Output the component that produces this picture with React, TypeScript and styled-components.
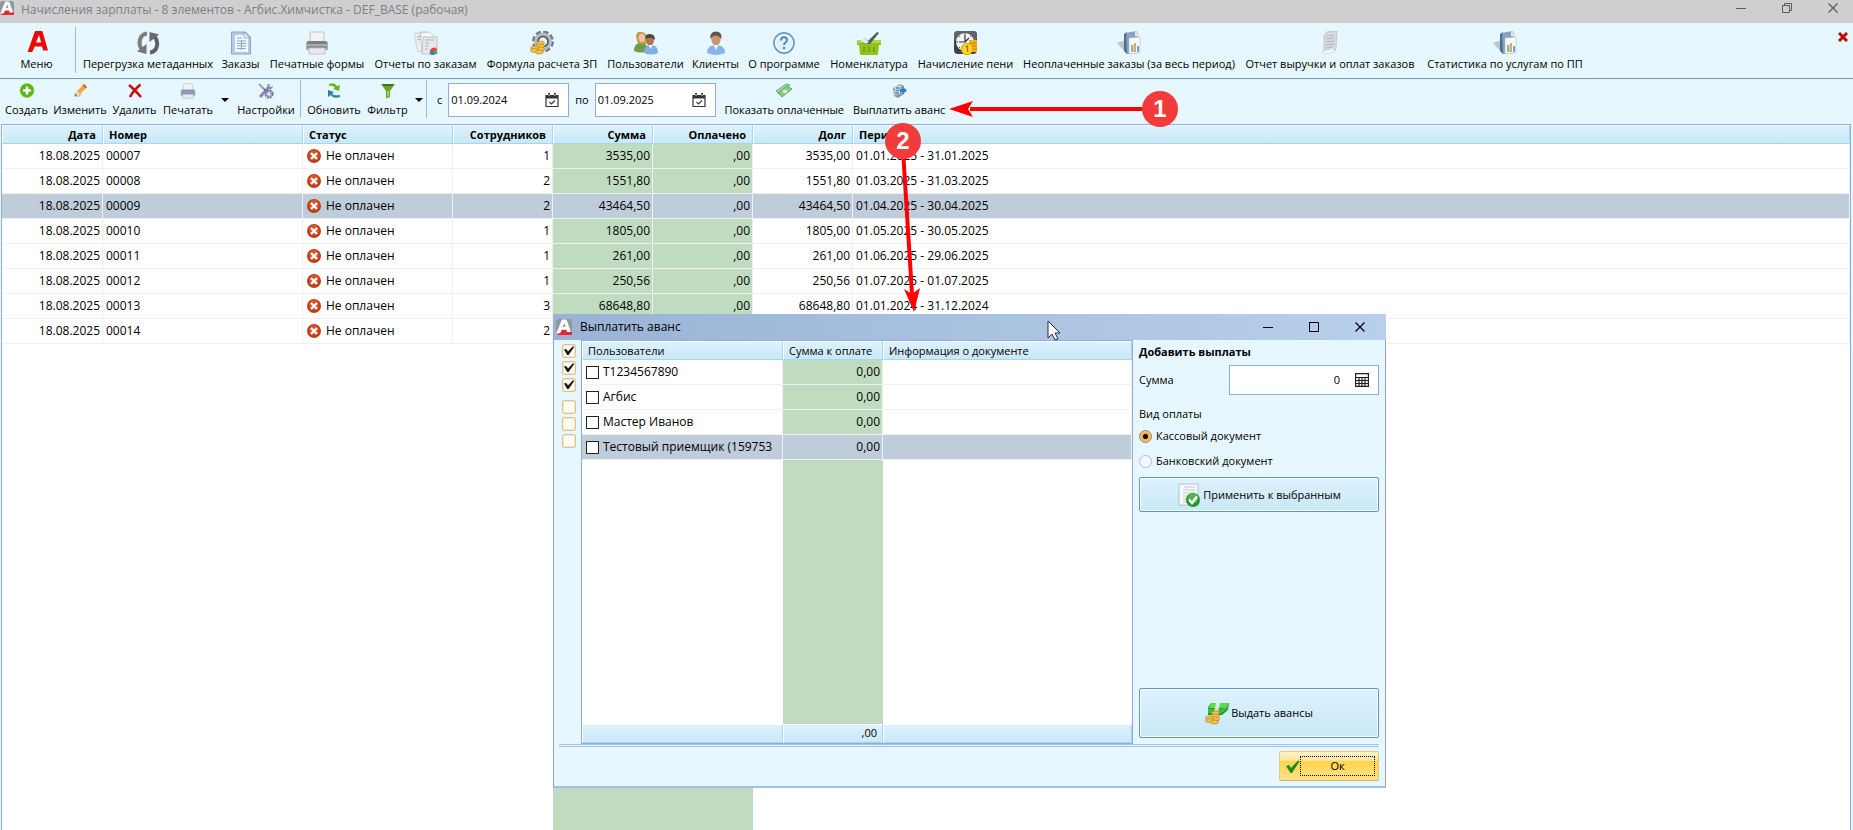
import React from 'react';
import styled, { createGlobalStyle, css } from 'styled-components';

const GlobalStyle = createGlobalStyle`
  * { box-sizing: border-box; }
  body { margin: 0; background: #fff; overflow-x: hidden; }
  body, button, input { font-family: "Open Sans", "Noto Sans", sans-serif; font-size: 11px; line-height: 16px; color: #000; }
  button { margin: 0; padding: 0; border: 0; background: none; cursor: default; }
  svg { display: block; flex: none; }
`;

const sky = '#e6f7ff';
const line = '#8fadda';
const green = '#c0dcc0';
const headFill = 'linear-gradient(#dcf2ff, #c9e8f7)';

/* ---------- window ---------- */

const Window = styled.div`
  position: relative;
  display: flex;
  flex-direction: column;
  min-height: 100vh;
  background: ${sky};
  overflow: hidden;
`;

const TitleBar = styled.header`
  display: flex;
  align-items: flex-start;
  gap: 7px;
  height: 23px;
  padding-top: 1px;
  background: #cfcfcf;
`;

const WindowTitle = styled.h1`
  flex: 1;
  margin: 0;
  font-size: 12px;
  font-weight: 400;
  line-height: 17px;
  color: #7a7f88;
`;

const WindowControls = styled.div<{ $color: string }>`
  display: flex;
  gap: 6px;
  color: ${(p) => p.$color};
`;

const ControlButton = styled.button`
  display: flex;
  justify-content: center;
  align-items: center;
  width: 40px;
  height: 14px;
  color: inherit;
`;

/* ---------- toolbars ---------- */

const MainToolbar = styled.nav`
  display: flex;
  height: 56px;
  padding-top: 8px;
  border-bottom: 1px solid #6f9fb8;
`;

const ActionToolbar = styled.div`
  display: flex;
  height: 45px;
  padding: 4px 0 0 3px;
`;

const ToolButton = styled.button<{ $width: number; $small?: boolean }>`
  display: flex;
  flex-direction: column;
  align-items: center;
  flex: none;
  gap: ${(p) => (p.$small ? 3 : 1)}px;
  width: ${(p) => p.$width}px;
  height: ${(p) => (p.$small ? 35 : 41)}px;
  white-space: nowrap;
`;

const DropArrow = styled.button`
  display: flex;
  align-items: center;
  justify-content: center;
  width: 15px;
  height: 34px;
  &::before {
    content: '';
    border: 4px solid transparent;
    border-top-color: #000;
    border-bottom: 0;
  }
`;

const Divider = styled.span<{ $tall?: boolean }>`
  width: 1px;
  height: ${(p) => (p.$tall ? 46 : 38)}px;
  margin: ${(p) => (p.$tall ? '-4px 3px 0 2px' : '-3px 3px 0 0')};
  background: #9fbde8;
`;

const CloseTab = styled.button`
  margin: 1px 5px 0 auto;
  height: 10px;
`;

const DateLabel = styled.label`
  display: flex;
  align-items: center;
  height: 34px;
  padding: 0 6px;
`;

const FieldBox = styled.div<{ $width: number; $height: number }>`
  display: flex;
  align-items: center;
  width: ${(p) => p.$width}px;
  height: ${(p) => p.$height}px;
  padding: 0 9px 0 2px;
  border: 1px solid ${line};
  background: #fff;
`;

const FieldInput = styled.input<{ $right?: boolean }>`
  flex: 1;
  min-width: 0;
  padding: 0;
  border: 0;
  outline: 0;
  background: none;
  ${(p) => p.$right && css`padding-right: 15px; text-align: right;`}
`;

const Periods = styled.div`
  display: flex;
  margin: 0 4px 0 1px;
`;

/* ---------- data grids ---------- */

const GridFrame = styled.main`
  display: flex;
  flex: 1;
  flex-direction: column;
  margin: 0 2px 0 1px;
  border: 1px solid ${line};
  border-bottom: 0;
  background: #fff;
`;

const Table = styled.table`
  width: 100%;
  table-layout: fixed;
  border-collapse: separate;
  border-spacing: 0;
  font-size: 12px;
`;

const HeadCell = styled.th<{ $right?: boolean; $plain?: boolean }>`
  height: 19px;
  padding: 0 6px 0 5px;
  border: 1px solid #a9d6ea;
  border-top-color: #fff;
  border-left-color: #fff;
  background: ${headFill};
  font-size: 11px;
  font-weight: ${(p) => (p.$plain ? 400 : 700)};
  text-align: ${(p) => (p.$right ? 'right' : 'left')};
  white-space: nowrap;
`;

const Row = styled.tr<{ $selected?: boolean }>`
  background: ${(p) => (p.$selected ? '#bfccda' : '#fff')};
`;

const Cell = styled.td<{ $right?: boolean; $fill?: boolean }>`
  height: 25px;
  padding: 0 2px 0 3px;
  border-right: 1px solid #f0f0f0;
  border-bottom: 1px solid #f0f0f0;
  background: ${(p) => (p.$fill ? green : 'transparent')};
  text-align: ${(p) => (p.$right ? 'right' : 'left')};
  white-space: nowrap;
  overflow: hidden;
`;

const CellContent = styled.label<{ $gap: number }>`
  display: flex;
  align-items: center;
  gap: ${(p) => p.$gap}px;
  padding-left: 1px;
`;

const EmptyArea = styled.div<{ $columns: string }>`
  display: grid;
  grid-template-columns: ${(p) => p.$columns};
  flex: 1;
`;

const GreenStripe = styled.div`
  grid-column: 2;
  background: ${green};
`;

/* ---------- dialog ---------- */

const Dialog = styled.section`
  position: absolute;
  left: 553px;
  top: 314px;
  width: 833px;
  border: 1px solid #97a3b3;
  border-top: 0;
  border-bottom: 2px solid #a4c1ec;
  background: ${sky};
`;

const DialogTitleBar = styled.div`
  display: flex;
  align-items: center;
  gap: 8px;
  height: 26px;
  margin: 0 -1px;
  padding: 0 6px 0 3px;
  background: linear-gradient(90deg, #9ab3d4, #b8d0ec);
`;

const DialogTitle = styled.h2`
  flex: 1;
  margin: 0;
  font-size: 12px;
  font-weight: 400;
`;

const DialogBody = styled.div`
  display: flex;
  height: 404px;
`;

const QuickChecks = styled.div`
  display: flex;
  flex-direction: column;
  gap: 8px;
  width: 27px;
  padding: 4px 0 0 8px;
`;

const CheckGroup = styled.div`
  display: flex;
  flex-direction: column;
  gap: 3px;
`;

const QuickCheck = styled.input`
  appearance: none;
  display: block;
  width: 14px;
  height: 14px;
  margin: 0;
  border: 1px solid #dfc492;
  border-radius: 2px;
  background: #fffaf2;
  box-shadow: inset 0 0 0 1px #fbe6c6;
  &:checked::before {
    content: '';
    display: block;
    width: 10px;
    height: 9px;
    margin: 1px;
    background: #111;
    clip-path: polygon(0 38%, 22% 32%, 40% 62%, 92% 0, 100% 14%, 46% 100%, 32% 100%);
  }
`;

const RowCheck = styled.input`
  appearance: none;
  flex: none;
  width: 13px;
  height: 13px;
  margin: 0;
  border: 1px solid #222;
  background: #fff;
`;

const UserGrid = styled.div`
  display: flex;
  flex: 1;
  flex-direction: column;
  border: 1px solid ${line};
  background: #fff;
`;

const Totals = styled.div`
  display: grid;
  grid-template-columns: 201px 100px 1fr;
  height: 19px;
`;

const Total = styled.div`
  padding-right: 5px;
  border: 1px solid #a9d6ea;
  border-top-color: #fff;
  border-left-color: #fff;
  background: ${headFill};
  text-align: right;
`;

const Panel = styled.form`
  display: flex;
  flex-direction: column;
  width: 252px;
  padding: 4px 6px;
`;

const PanelHeading = styled.h3`
  margin: 0 0 5px;
  font-size: 11px;
  font-weight: 700;
`;

const AmountRow = styled.div`
  display: flex;
  align-items: center;
  justify-content: space-between;
`;

const PaymentKind = styled.fieldset`
  display: flex;
  flex-direction: column;
  gap: 9px;
  margin: 11px 0 8px;
  padding: 0;
  border: 0;
`;

const KindLegend = styled.legend`
  margin-bottom: 6px;
  padding: 0;
`;

const RadioLabel = styled.label`
  display: flex;
  align-items: center;
  gap: 4px;
`;

const Radio = styled.input`
  appearance: none;
  width: 13px;
  height: 13px;
  margin: 0;
  border: 1px solid #a6bfe4;
  border-radius: 50%;
  background: #f3f8ff;
  &:checked {
    border-color: #8c8265;
    background: radial-gradient(circle, #000 0 2px, #f5a542 3px, #fcd583 6px);
  }
`;

const PanelButton = styled.button<{ $height: number }>`
  display: flex;
  align-items: center;
  justify-content: center;
  gap: 2px;
  height: ${(p) => p.$height}px;
  border: 1px solid #5b95da;
  border-radius: 2px;
  background: ${headFill};
  box-shadow: inset 0 0 0 1px #fff;
`;

const PanelSpacer = styled.div`
  flex: 1;
`;

const PanelEnd = styled.div`
  height: 2px;
`;

const DialogFooter = styled.div`
  display: flex;
  flex-direction: column;
  align-items: flex-end;
  gap: 4px;
  padding: 0 6px 5px 5px;
`;

const DoubleRule = styled.div`
  align-self: stretch;
  height: 3px;
  border-top: 1px solid #a4c1ec;
  border-bottom: 1px solid #a4c1ec;
`;

const OkButton = styled.button`
  display: flex;
  align-items: center;
  width: 100px;
  height: 30px;
  padding: 0 3px 0 6px;
  border: 1px solid #e0cd84;
  border-bottom-color: #c9b56e;
  border-radius: 2px;
  background: linear-gradient(#fff4c6, #ffe797 30%, #ffd44a 32%, #ffe28a);
`;

const OkText = styled.span`
  flex: 1;
  height: 20px;
  border: 1px dotted #000;
  line-height: 18px;
`;

/* ---------- guide marks ---------- */

const Marks = styled.svg`
  position: absolute;
  left: 0;
  top: 0;
  pointer-events: none;
`;

const StepBadge = styled.div<{ $x: number; $y: number }>`
  position: absolute;
  left: ${(p) => p.$x}px;
  top: ${(p) => p.$y}px;
  width: 36px;
  height: 36px;
  border-radius: 50%;
  background: #f23b3b;
  color: #fff;
  font: bold 24px/36px "Liberation Sans", sans-serif;
  text-align: center;
`;

/* ---------- icons ---------- */

const Icon = ({ s = 24, children }: { s?: number; children: React.ReactNode }) => (
  <svg width={s} height={s} viewBox={`0 0 ${s} ${s}`} aria-hidden="true">{children}</svg>
);

const BrandMark = ({ s }: { s: number }) => (
  <svg width={s} height={s} viewBox="0 0 16 16" aria-hidden="true">
    <rect width="16" height="16" rx="3" fill="#8d999c" />
    <path d="M0 14 4 10h8l4 3v3H2z" fill="#e8262f" />
    <path fillRule="evenodd" d="M0 15 5.500 1.500Q6 .6 7 .6h2.400Q10.400.6 10.800 1.500L15 13h-4l-.7-2.200H5.800L4.300 14zM6.600 8h3L8.500 3.900z" fill="#fff" />
  </svg>
);

const MenuIcon = () => (
  <Icon>
    <path fillRule="evenodd" d="M2.500 21 9.300 2Q10.100-1 12.800-1h2q2.400 0 3 2.500L23 19.500h-4.800l-1.300-4H9.800L7.200 21zM11 11.500h5.200L14 4z" fill="#ea0a0a" />
  </Icon>
);
const ReloadIcon = () => (
  <Icon>
    <path d="M11 2.500C3.500 3 1.500 13 6 18.500" fill="none" stroke="#7d7d7d" strokeWidth="4" />
    <path d="m1 20.500 9.500 2.500V13z" fill="#757575" />
    <path d="M14 21.500c8-1 9-11 4.500-16" fill="none" stroke="#606060" strokeWidth="4" />
    <path d="M13.500 1 23 3.500 13.500 11z" fill="#6a6a6a" />
  </Icon>
);
const OrdersIcon = () => (
  <Icon>
    <path d="M2.500 1h14l5 5v17h-19z" fill="#b6cbe8" stroke="#8aa6cf" />
    <path d="M6 4h9v3h4v14H6z" fill="#f5f9ff" /><path d="M15 1v6h6z" fill="#dfeafa" stroke="#7e9bc6" strokeWidth=".7" />
    <path d="M8 10h9M8 12.500h9M8 15h9M8 17.500h9M12.500 9v10M8 7h5" stroke="#8ca5cc" />
  </Icon>
);
const PrinterIcon = ({ s = 24 }: { s?: number }) => (
  <svg width={s} height={s} viewBox="0 0 24 24" aria-hidden="true">
    <path d="M5 11V2q0-1 1-1h12q1 0 1 1v9z" fill="#f3f3f5" stroke="#bdbfc5" />
    <path d="M1 12q0-2 2-2h18q2 0 2 2v7H1z" fill="#aaacb0" /><path d="M3 10h18l1 3H2z" fill="#7d7f84" />
    <path d="M2 15h20v2H2z" fill="#8d8f94" /><path d="M4 17h16v6H4z" fill="#e9e9ec" stroke="#b3b5ba" strokeWidth=".8" />
    {s < 20 && <path d="M3 11h18v4H3z" fill="#7fa3cf" />}
  </svg>
);
const ReportsIcon = () => (
  <Icon>
    <path d="m0 3 12-3 3 18-11 3z" fill="#eceeee" stroke="#c2c6c6" strokeWidth=".7" />
    <path d="m6 2 9-1 4 3v15l-11 1z" fill="#f5f6f6" stroke="#bcc1c1" strokeWidth=".7" />
    <path d="M9 6h14v17H8z" fill="#e8eaea" stroke="#b4baba" strokeWidth=".8" />
    <path d="M3 6l5-1M3 9l4-1M11 9h9M11 12h4M11 15h4M11 18h3" stroke="#aeb5b5" />
    <path d="M16 21a4 4 0 0 1 7-3l-3 3z" fill="#e2492c" /><path d="M23 18v5h-3v-2z" fill="#58aa3c" /><path d="M15.500 20.500h5V24h-3q-2-1-2-3.500z" fill="#387fd4" />
  </Icon>
);
const Coins = () => (
  <g stroke="#b07a18" strokeWidth=".6">
    {[[9, 12], [9, 15], [9, 18], [3, 17], [3, 19.500], [8, 21]].map(([x, y]) => (
      <ellipse key={`${x}-${y}`} cx={x + 1.500} cy={y} rx="4" ry="2" fill="#f2c24c" />
    ))}
  </g>
);
const FormulaIcon = () => (
  <Icon>
    <g fill="none" stroke="#6e7681">
      <circle cx="13" cy="10.500" r="9.500" strokeWidth="3" strokeDasharray="5 2.460" />
      <circle cx="13" cy="10.500" r="7" strokeWidth="4" stroke="#b3bac3" />
      <circle cx="13" cy="10.500" r="5" strokeWidth="1.500" stroke="#3f464f" />
    </g>
    <Coins />
  </Icon>
);
const UsersIcon = () => (
  <Icon>
    <path d="M0 20q0-8 7-8t7 8q-7 3-14 0z" fill="#6f9d45" /><path d="M2 6q0-6 6-5t5 8l-1 4H4z" fill="#c29a4d" />
    <ellipse cx="8" cy="7" rx="3.300" ry="4.300" fill="#eac59e" />
    <path d="M10 22q0-8 7-8t7 8q-7 3-14 0z" fill="#7fb0e3" /><ellipse cx="16" cy="9" rx="4" ry="5.500" fill="#ad7650" />
    <path d="M11 8q0-5 5-5t5 6q-4-4-10-1z" fill="#4c4742" /><path d="m14.500 14 2 4 2-4z" fill="#fff" />
  </Icon>
);
const ClientIcon = () => (
  <Icon>
    <path d="M3 22q0-8 9-8t9 8q-9 4-18 0z" fill="#86b5e8" /><ellipse cx="12" cy="8" rx="4.700" ry="6.500" fill="#ca9670" />
    <path d="M6.500 8Q5.500.5 12 .5T17.300 8Q15 4 11 4.500 8 5 6.500 8z" fill="#5e5349" /><path d="m9.500 14 2.500 5 2.500-5z" fill="#f4f8fd" />
  </Icon>
);
const HelpIcon = () => (
  <Icon>
    <circle cx="12" cy="12" r="10" fill="#e0f1fb" stroke="#6c9fcb" strokeWidth="1.800" />
    <circle cx="12" cy="12" r="8.500" fill="none" stroke="#fff" />
    <path d="M9 9.500q0-3.200 3-3.200t3 2.700c0 2.300-3 2.300-3 5" fill="none" stroke="#5089bb" strokeWidth="2" /><circle cx="12" cy="17" r="1.300" fill="#5089bb" />
  </Icon>
);
const BasketIcon = () => (
  <Icon>
    <path d="M0 9h24v5h-2l-1 9q0 1-1 1H4q-1 0-1-1l-1-9H0z" fill="#8fc31c" />
    <path d="M0 9h24v3H0z" fill="#a9da35" /><path d="M7 16v5M12 16v5M17 16v5" stroke="#6d9d10" strokeWidth="1.500" />
    <path d="m4 10 4-3 3 3 9-9 2 1-9 11H7z" fill="#555b60" /><path d="m3 10 5-3 4 4-3 2z" fill="#e8e8df" />
  </Icon>
);
const PenaltyIcon = () => (
  <Icon>
    <rect width="23" height="23" rx="4" fill="#3f4145" /><rect width="23" height="10" rx="4" fill="#606368" />
    <circle cx="11" cy="11" r="9" fill="#f4f4f2" /><path d="M11 4v7H5m6 0 4-4" fill="none" stroke="#333" strokeWidth="1.200" /><path d="M11 2v2M2 11h2M5 5l1 1M17 5l-1 1M5 17l1-1" stroke="#555" />
    <path d="M15 9h8v12h-8z" fill="#f2b21d" /><path d="M15 12h8M15 15h8M15 18h8" stroke="#c98a0b" />
    <circle cx="13" cy="18" r="5.700" fill="#ffd42a" stroke="#dca40f" /><path d="m11.500 16 2-1v6" fill="none" stroke="#a87400" strokeWidth="1.300" />
  </Icon>
);
const BinderIcon = () => (
  <Icon>
    <path d="m0 12 9 10V9z" fill="#bac6cc" /><path d="m7 3 3-2v22l-3-3z" fill="#4f7094" />
    <path d="M9 2 19 0l3 3v19l-12 1z" fill="#87a2bf" /><path d="M18 0v5l4 1V3z" fill="#dce6ef" />
    <path d="m12 7 11-1v16l-11 1z" fill="#f8fafb" stroke="#b3bcc5" strokeWidth=".6" />
    <path d="M14 14h2.500v7H14z" fill="#8ac07b" /><path d="M17 12h2v9h-2z" fill="#e89a7b" /><path d="M20 15h2v6h-2z" fill="#6aa0dc" />
  </Icon>
);
const PageIcon = () => (
  <Icon>
    <path d="m6 4 3-3 10-1-1 17-2 4-11 2-1-2 2-1z" fill="#d5dbde" stroke="#c0c7ca" />
    <path d="m8 5 8-1M8 8l8-1M8 11l8-1M8 14l8-1M8 17l7-1" stroke="#b0b9bd" /><path d="m4 21 11-3 1 3-11 2z" fill="#f5f7f8" />
  </Icon>
);
const AddIcon = () => (
  <Icon s={16}><circle cx="8" cy="7.500" r="7" fill="#5ab516" stroke="#92d35a" /><path d="M8 3.500v8M4 7.500h8" stroke="#fff" strokeWidth="2.500" /></Icon>
);
const EditIcon = () => (
  <Icon s={16}><path d="M2 10h8l-2 4H2z" fill="#c8cdd1" /><path d="M3 13 5 8l7-7 3 3-7 7z" fill="#f3a83b" /><path d="m12 1 3 3-1.500 1.500-3-3z" fill="#dc5a4b" /><path d="m3 13 2-5 3 3z" fill="#f1dcb8" /><path d="m3 13 .8-2 1.200 1.200z" fill="#333" /></Icon>
);
const DeleteIcon = () => (
  <Icon s={16}><path d="M2 2q5 4 12 12M13.500 1.500Q6 8 3 14" fill="none" stroke="#c40f0f" strokeWidth="2.600" /></Icon>
);
const SettingsIcon = () => (
  <Icon s={16}>
    <path d="m2 14 9-10" stroke="#8788b4" strokeWidth="3" /><path d="M10 1q-2 4 1 5 3 1 4-3l-2 1-2-1 1-2z" fill="#8788b4" />
    <path d="M1 1 8 8" stroke="#67689a" strokeWidth="1.600" /><path d="m1 1 4 2 1 3-3-1z" fill="#a8a9cc" />
    <circle cx="11" cy="11" r="3.300" fill="#e2e2f1" stroke="#70719f" strokeWidth="2.600" strokeDasharray="1.900 .7" /><circle cx="11" cy="11" r="2.600" fill="#b5b6d6" /><circle cx="11" cy="11" r="1.200" fill="#fff" />
  </Icon>
);
const RefreshIcon = () => (
  <Icon s={16}><path d="M3 1q6-2 8 2l3-1-1 6-6-2 2-1Q7 2 3 3z" fill="#6bb52b" /><path d="M14 14q-7 2-9-2l-3 2V7l6 2-2 2q2 2 8 1z" fill="#2b83a8" /></Icon>
);
const FilterIcon = () => (
  <Icon s={16}><path d="M1 1h14l-5 7v6l-4 1.500V8z" fill="#6ba32b" /><path d="M2 1h12l-2 2H4z" fill="#3f7412" /><path d="M7.500 8h1.500v5l-1.500 1z" fill="#b4dc79" /></Icon>
);
const CashIcon = () => (
  <Icon s={16}><path d="M0 8 10 1l4 1L4 11z" fill="#a3d79d" stroke="#5fa365" strokeWidth=".8" /><path d="m2 10 9-7 5 3-10 8z" fill="#8bcb88" stroke="#559b5c" strokeWidth=".8" /><ellipse cx="9" cy="8.500" rx="2.200" ry="1.800" fill="#dcf3d8" /></Icon>
);
const PayoutIcon = () => (
  <Icon s={16}><path d="m2 5 7-4 4 2v8l-6 4-4-2z" fill="#8e969d" /><path d="m4 4 6-2-1 9-6 1z" fill="#e0e7ed" /><path d="M5 5h4M4.500 7.500h4M4 10h4" stroke="#3d84c4" strokeWidth="1.500" /><path d="M9 6h3V4l4 3.500L12 11V9H9z" fill="#2b7fce" /></Icon>
);
const CalendarIcon = () => (
  <Icon s={14}><path d="M1 2.500h12v11H1z" fill="#fff" stroke="#333" strokeWidth="1.200" /><path d="M1 2h12v3.500H1z" fill="#333" /><path d="M4 0v4M10 0v4" stroke="#333" strokeWidth="2" /><path d="M4 1v2M10 1v2" stroke="#fff" strokeWidth=".8" /><path d="m4.500 9 2 2 3.500-3.500" fill="none" stroke="#333" strokeWidth="1.100" /></Icon>
);
const CalculatorIcon = () => (
  <Icon s={14}><path d="M.6.600h12.800v12.800H.600zM.600 4.500h12.800M1 7.500h12M1 10.500h12M4 4.500v9M7 4.500v9M10 4.500v9" fill="none" stroke="#222" strokeWidth="1.200" /></Icon>
);
const ErrorIcon = () => (
  <Icon s={14}><circle cx="7" cy="7" r="7" fill="#b8401a" /><circle cx="7" cy="6" r="5" fill="#dd5029" /><path d="m4 4 6 6M10 4l-6 6" stroke="#fff" strokeWidth="2.400" /></Icon>
);
const ApplyIcon = () => (
  <Icon>
    <path d="M2 1h19v21H2z" fill="#f6f8f9" stroke="#b4c3cc" /><path d="M7 4h11M6 7h12M6 10h12M6 13h8M6 16h6M6 19h6" stroke="#c3c9cd" />
    <circle cx="16" cy="17" r="7" fill="#21962a" /><circle cx="16" cy="15.500" r="5" fill="#4fb84e" /><path d="m12 16.500 3 3.500 5-6.500" fill="none" stroke="#fff" strokeWidth="2.400" />
  </Icon>
);
const MoneyIcon = () => (
  <Icon>
    <path d="m3 6 3-4h18l-1 7-6 5H3z" fill="#229a2b" /><path d="m3 7 3-5h18l-4 5z" fill="#5bdc4c" /><path d="M11 2h4l-2 10H9z" fill="#dfe8df" /><path d="M3 9h14l6-5M3 11h14l6-5" fill="none" stroke="#8bea77" strokeWidth=".7" />
    <Coins />
  </Icon>
);
const OkIcon = () => (
  <Icon s={14}><path d="m0 7 3-1 2 3 7-7.500 1.500 1L6 14H4.500z" fill="#1d8a1d" /></Icon>
);
const MinimizeIcon = () => <Icon s={10}><path d="M0 5.500h10" stroke="currentColor" /></Icon>;
const RestoreIcon = () => <Icon s={10}><path d="M.5 2.500h7v7h-7zM2.500 2.500v-2h7v7h-2" fill="none" stroke="currentColor" /></Icon>;
const MaximizeIcon = () => <Icon s={10}><path d="M.5.500h9v9h-9z" fill="none" stroke="currentColor" /></Icon>;
const CloseIcon = () => <Icon s={10}><path d="m.5.500 9 9M9.500.500l-9 9" stroke="currentColor" strokeWidth="1.300" /></Icon>;

/* ---------- data ---------- */

const sections: [string, number, React.FC][] = [
  ['Перегрузка метаданных', 138, ReloadIcon],
  ['Заказы', 47, OrdersIcon],
  ['Печатные формы', 106, PrinterIcon],
  ['Отчеты по заказам', 111, ReportsIcon],
  ['Формула расчета ЗП', 122, FormulaIcon],
  ['Пользователи', 85, UsersIcon],
  ['Клиенты', 55, ClientIcon],
  ['О программе', 82, HelpIcon],
  ['Номенклатура', 88, BasketIcon],
  ['Начисление пени', 105, PenaltyIcon],
  ['Неоплаченные заказы (за весь период)', 222, BinderIcon],
  ['Отчет выручки и оплат заказов', 180, PageIcon],
  ['Статистика по услугам по ПП', 170, BinderIcon],
];

const accruals = [
  { number: '00007', staff: 1, sum: '3535,00', period: '01.01.2025 - 31.01.2025' },
  { number: '00008', staff: 2, sum: '1551,80', period: '01.03.2025 - 31.03.2025' },
  { number: '00009', staff: 2, sum: '43464,50', period: '01.04.2025 - 30.04.2025' },
  { number: '00010', staff: 1, sum: '1805,00', period: '01.05.2025 - 30.05.2025' },
  { number: '00011', staff: 1, sum: '261,00', period: '01.06.2025 - 29.06.2025' },
  { number: '00012', staff: 1, sum: '250,56', period: '01.07.2025 - 01.07.2025' },
  { number: '00013', staff: 3, sum: '68648,80', period: '01.01.2024 - 31.12.2024' },
  { number: '00014', staff: 2, sum: '', period: '' },
];

const users = ['Т1234567890', 'Агбис', 'Мастер Иванов', 'Тестовый приемщик (159753'];

const Columns = ({ widths }: { widths: number[] }) => (
  <colgroup>
    {widths.map((w, i) => <col key={i} width={w} />)}
    <col />
  </colgroup>
);

const Tool = ({ label, width, icon }: { label: string; width: number; icon: React.ReactNode }) => (
  <ToolButton type="button" $small $width={width}>{icon}{label}</ToolButton>
);

const DateField = ({ id, value }: { id: string; value: string }) => (
  <FieldBox $width={121} $height={34}>
    <FieldInput id={id} defaultValue={value} />
    <button type="button" aria-label="Календарь"><CalendarIcon /></button>
  </FieldBox>
);

const AccrualsGrid = () => (
  <GridFrame>
    <Table>
      <Columns widths={[101, 200, 150, 100, 100, 100, 100]} />
      <thead>
        <tr>
          <HeadCell $right>Дата</HeadCell>
          <HeadCell>Номер</HeadCell>
          <HeadCell>Статус</HeadCell>
          <HeadCell $right>Сотрудников</HeadCell>
          <HeadCell $right>Сумма</HeadCell>
          <HeadCell $right>Оплачено</HeadCell>
          <HeadCell $right>Долг</HeadCell>
          <HeadCell>Период</HeadCell>
        </tr>
      </thead>
      <tbody>
        {accruals.map((a) => (
          <Row key={a.number} $selected={a.number === '00009'}>
            <Cell $right>18.08.2025</Cell>
            <Cell>{a.number}</Cell>
            <Cell><CellContent as="span" $gap={5}><ErrorIcon />Не оплачен</CellContent></Cell>
            <Cell $right>{a.staff}</Cell>
            <Cell $right $fill={a.number !== '00009'}>{a.sum}</Cell>
            <Cell $right $fill={a.number !== '00009'}>{a.sum && ',00'}</Cell>
            <Cell $right>{a.sum}</Cell>
            <Cell>{a.period}</Cell>
          </Row>
        ))}
      </tbody>
    </Table>
    <EmptyArea $columns="551px 200px 1fr"><GreenStripe /></EmptyArea>
  </GridFrame>
);

const AdvanceDialog = () => (
  <Dialog role="dialog" aria-labelledby="advance-title">
    <DialogTitleBar>
      <BrandMark s={16} />
      <DialogTitle id="advance-title">Выплатить аванс</DialogTitle>
      <WindowControls $color="#000">
        <ControlButton type="button" aria-label="Свернуть"><MinimizeIcon /></ControlButton>
        <ControlButton type="button" aria-label="Развернуть"><MaximizeIcon /></ControlButton>
        <ControlButton type="button" aria-label="Закрыть"><CloseIcon /></ControlButton>
      </WindowControls>
    </DialogTitleBar>
    <DialogBody>
      <QuickChecks>
        <CheckGroup>
          {[1, 2, 3].map((n) => <QuickCheck key={n} type="checkbox" defaultChecked aria-label={`Отметить ${n}`} />)}
        </CheckGroup>
        <CheckGroup>
          {[1, 2, 3].map((n) => <QuickCheck key={n} type="checkbox" aria-label={`Снять ${n}`} />)}
        </CheckGroup>
      </QuickChecks>
      <UserGrid>
        <Table>
          <Columns widths={[201, 100]} />
          <thead>
            <tr>
              <HeadCell $plain>Пользователи</HeadCell>
              <HeadCell $plain>Сумма к оплате</HeadCell>
              <HeadCell $plain>Информация о документе</HeadCell>
            </tr>
          </thead>
          <tbody>
            {users.map((u, i) => (
              <Row key={u} $selected={i === 3}>
                <Cell><CellContent $gap={4}><RowCheck type="checkbox" />{u}</CellContent></Cell>
                <Cell $right $fill={i !== 3}>0,00</Cell>
                <Cell />
              </Row>
            ))}
          </tbody>
        </Table>
        <EmptyArea $columns="201px 100px 1fr"><GreenStripe /></EmptyArea>
        <Totals><Total /><Total>,00</Total><Total /></Totals>
      </UserGrid>
      <Panel>
        <PanelHeading>Добавить выплаты</PanelHeading>
        <AmountRow>
          <label htmlFor="amount">Сумма</label>
          <FieldBox $width={150} $height={30}>
            <FieldInput id="amount" $right defaultValue="0" />
            <button type="button" aria-label="Калькулятор"><CalculatorIcon /></button>
          </FieldBox>
        </AmountRow>
        <PaymentKind>
          <KindLegend>Вид оплаты</KindLegend>
          <RadioLabel><Radio type="radio" name="kind" defaultChecked />Кассовый документ</RadioLabel>
          <RadioLabel><Radio type="radio" name="kind" />Банковский документ</RadioLabel>
        </PaymentKind>
        <PanelButton type="button" $height={35}><ApplyIcon />Применить к выбранным</PanelButton>
        <PanelSpacer />
        <PanelButton type="button" $height={50}><MoneyIcon />Выдать авансы</PanelButton>
        <PanelEnd />
      </Panel>
    </DialogBody>
    <DialogFooter>
      <DoubleRule />
      <OkButton type="button"><OkIcon /><OkText>Ок</OkText></OkButton>
    </DialogFooter>
  </Dialog>
);

export default function App() {
  return (
    <Window>
      <GlobalStyle />
      <TitleBar>
        <BrandMark s={14} />
        <WindowTitle>Начисления зарплаты - 8 элементов - Агбис.Химчистка - DEF_BASE (рабочая)</WindowTitle>
        <WindowControls $color="#5c5c5c">
          <ControlButton type="button" aria-label="Свернуть"><MinimizeIcon /></ControlButton>
          <ControlButton type="button" aria-label="Восстановить"><RestoreIcon /></ControlButton>
          <ControlButton type="button" aria-label="Закрыть"><CloseIcon /></ControlButton>
        </WindowControls>
      </TitleBar>
      <MainToolbar>
        <ToolButton type="button" $width={73}><MenuIcon />Меню</ToolButton>
        <Divider $tall />
        {sections.map(([label, width, SectionIcon]) => (
          <ToolButton key={label} type="button" $width={width}><SectionIcon />{label}</ToolButton>
        ))}
        <CloseTab type="button" aria-label="Закрыть вкладку">
          <Icon s={10}><path d="m1 1 8 8M9 1 1 9" stroke="#bd0a0a" strokeWidth="3" /></Icon>
        </CloseTab>
      </MainToolbar>
      <ActionToolbar>
        <Tool label="Создать" width={47} icon={<AddIcon />} />
        <Tool label="Изменить" width={60} icon={<EditIcon />} />
        <Tool label="Удалить" width={49} icon={<DeleteIcon />} />
        <Tool label="Печатать" width={58} icon={<PrinterIcon s={16} />} />
        <DropArrow type="button" aria-label="Варианты печати" />
        <Tool label="Настройки" width={68} icon={<SettingsIcon />} />
        <Divider />
        <Tool label="Обновить" width={60} icon={<RefreshIcon />} />
        <Tool label="Фильтр" width={47} icon={<FilterIcon />} />
        <DropArrow type="button" aria-label="Варианты фильтра" />
        <Divider />
        <Periods>
          <DateLabel htmlFor="from">с</DateLabel>
          <DateField id="from" value="01.09.2024" />
          <DateLabel htmlFor="to">по</DateLabel>
          <DateField id="to" value="01.09.2025" />
        </Periods>
        <Tool label="Показать оплаченные" width={129} icon={<CashIcon />} />
        <Tool label="Выплатить аванс" width={101} icon={<PayoutIcon />} />
      </ActionToolbar>
      <AccrualsGrid />
      <AdvanceDialog />
      <Marks width="1200" height="350" viewBox="0 0 1200 350" aria-hidden="true">
        <path d="M1150 109H970M903 150l9 144" stroke="#f00" strokeWidth="4" />
        <path d="m949 109 24-8-5 8 5 8zM914 312l-10-23 8 5 8-6z" fill="#f00" />
        <path d="M1048 321v17l4-4 3 6 3-1-3-6h5z" fill="#fff" stroke="#222b3d" />
      </Marks>
      <StepBadge $x={1142} $y={91}>1</StepBadge>
      <StepBadge $x={885} $y={123}>2</StepBadge>
    </Window>
  );
}
